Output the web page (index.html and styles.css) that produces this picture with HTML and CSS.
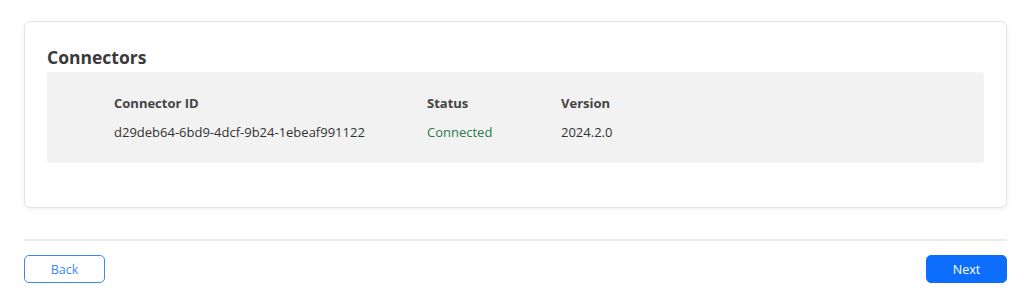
FILE: index.html
```html
<!DOCTYPE html>
<html lang="en">

<head>
    <meta charset="utf-8">
    <meta name="viewport" content="width=device-width, initial-scale=1.0">
    <title>Connectors</title>
    <link rel="stylesheet" href="styles.css">
</head>

<body>
    <main class="page">
        <section class="card">
            <h2>Connectors</h2>
            <div class="panel">
                <table class="connectors">
                    <thead>
                        <tr>
                            <th class="col-id">Connector ID</th>
                            <th class="col-status">Status</th>
                            <th class="col-version">Version</th>
                        </tr>
                    </thead>
                    <tbody>
                        <tr>
                            <td>d29deb64-6bd9-4dcf-9b24-1ebeaf991122</td>
                            <td class="connected">Connected</td>
                            <td>2024.2.0</td>
                        </tr>
                    </tbody>
                </table>
            </div>
        </section>

        <footer class="actions">
            <button class="btn btn-outline">Back</button>
            <button class="btn btn-primary">Next</button>
        </footer>
    </main>
</body>

</html>
```

FILE: styles.css
```css
body {
    margin: 0;
    background-color: #fff;
    font-family: "Open Sans", "Noto Sans", sans-serif;
    color: #333;
}

.page {
    padding: 21px 17px 0 24px;
}

.card {
    border: 1px solid #e3e3e3;
    border-radius: 6px;
    box-shadow: 0 2px 6px rgba(0, 0, 0, .06);
    padding: 24px 22px 44px;
}

.card h2 {
    margin: 0 0 4px;
    font-size: 17.5px;
    line-height: 22px;
    font-weight: 700;
    color: #3a3a3a;
}

.panel {
    background-color: #f2f2f2;
    border-radius: 3px;
    padding: 21px 0 21px 67px;
}

.connectors {
    border-collapse: collapse;
    font-size: 13px;
}

.connectors th {
    text-align: left;
    font-weight: 700;
    color: #444;
    padding: 0 0 9px;
    line-height: 20px;
}

.connectors td {
    padding: 0;
    line-height: 20px;
    color: #333;
}

.col-id {
    width: 313px;
}

.col-status {
    width: 134px;
}

.connected {
    color: #2a7a4b !important;
}

.actions {
    margin-top: 31px;
    border-top: 2px solid #ebebeb;
    padding-top: 14px;
    display: flex;
    justify-content: space-between;
}

.btn {
    width: 81px;
    height: 28px;
    border-radius: 5px;
    font-family: "Open Sans", "Noto Sans", sans-serif;
    font-size: 12.5px;
    cursor: pointer;
}

.btn-outline {
    background-color: #fff;
    border: 1px solid #3d87f5;
    color: #3d87f5;
}

.btn-primary {
    background-color: #0d6efd;
    border: 1px solid #0d6efd;
    color: #fff;
}
```
